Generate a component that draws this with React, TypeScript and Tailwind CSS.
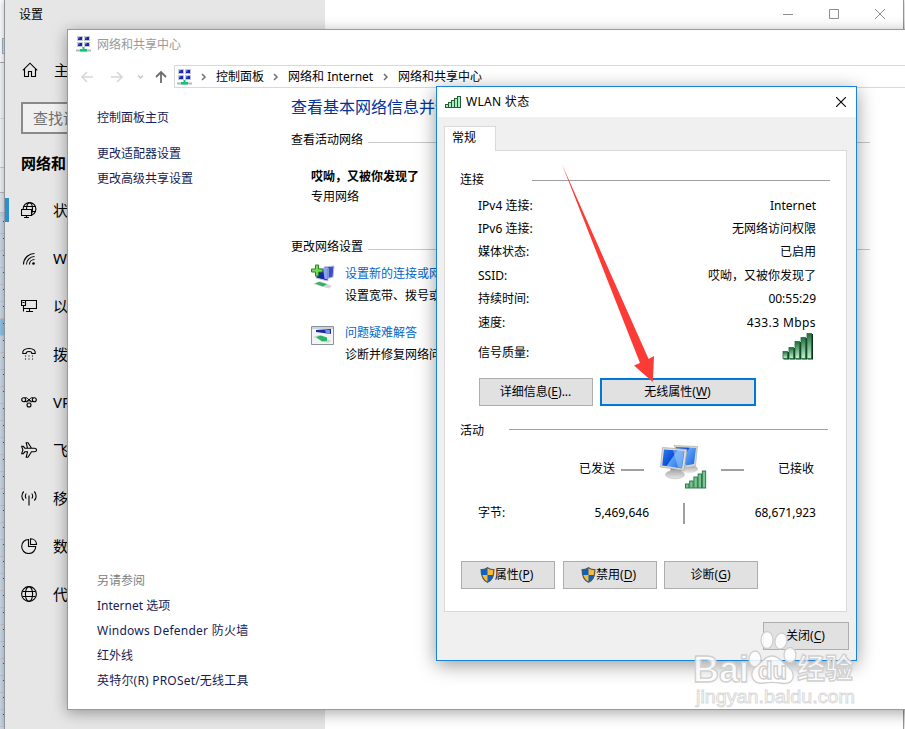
import type { ReactNode } from 'react';

const settingsNav: { label: string; icon: ReactNode; active?: boolean }[] = [
  {
    label: '状态',
    active: true,
    icon: (
      <>
        <circle cx="8.500" cy="7" r="6.400" />
        <ellipse cx="8.500" cy="7" rx="3" ry="6.400" />
        <path d="M2.800 4.500h11.400M2.800 9.500h11.400" />
        <path d="M.5 7.500h10v6H.5z" fill="#e6e6e6" />
        <path d="M5.500 13.500v2M3 15.500h5" />
      </>
    ),
  },
  {
    label: 'WLAN',
    icon: (
      <>
        <path d="M2.500 14.500c0-6 5-11 11-11M5.500 14.500c0-4.400 3.600-8 8-8M8.500 14.500c0-2.800 2.200-5 5-5" />
        <circle cx="12.500" cy="13.500" r="1.300" fill="currentColor" stroke="none" />
      </>
    ),
  },
  {
    label: '以太网',
    icon: <path d="M4.500 2.500h11v8h-13M.5 2.500h4v5h-4zM2.500 7.500v6M8.500 10.500v3M5 13.500h7M1.500 4.500h2" />,
  },
  {
    label: '拨号',
    icon: (
      <>
        <path d="M1.800 7.500C1.300 4.500 3.500 2.500 8 2.500s6.700 2 6.200 5h-3.400c.2-1.200-.3-2-2.800-2s-3 .8-2.800 2z" />
        <path d="M4.500 9.500v1M8 9.500v1M11.500 9.500v1M4.500 12.500v1M8 12.500v1M11.500 12.500v1" />
      </>
    ),
  },
  {
    label: 'VPN',
    icon: (
      <>
        <circle cx="2.700" cy="5.800" r="2" />
        <circle cx="13.300" cy="5.800" r="2" />
        <circle cx="8" cy="11" r="2" />
        <path d="M3.500 4C5 3 6.500 4 7.500 5.500L10 8.500M12.500 4C11 3 9.500 4 8.500 5.500L6 8.500M4 7.500c1.500.5 2.500-.5 4-2.500 1.500 2 2.500 3 4 2.500" strokeWidth="1" />
      </>
    ),
  },
  {
    label: '飞行模式',
    icon: <path d="M6.500 6.200h4L7 .7H5.200l1.300 5.500H3.800L2.300 4.300H.7L1.900 8 .7 11.700h1.600l1.500-1.900h2.700L5.200 15.300H7l3.500-5.500h3c1.100 0 2-.7 2-1.800s-.9-1.800-2-1.800h-3" />,
  },
  {
    label: '移动热点',
    icon: <path d="M8 5.500v10M5.300 8.500C4 7.500 4 5 5.300 3.500M10.700 8.500C12 7.500 12 5 10.700 3.500M2.700 10.500C.3 8.500.3 4 2.700 1.500M13.300 10.500c2.400-2 2.400-6.500 0-9" />,
  },
  {
    label: '数据使用量',
    icon: <path d="M7.500 1.500C3.500 1.500.7 4.500.7 8.500s3 7 7 7 7-3 7-7H7.500zM9.500.7v5.800h6C15.500 3 13 .7 9.500.7z" />,
  },
  {
    label: '代理',
    icon: (
      <>
        <circle cx="8" cy="8" r="7.400" />
        <ellipse cx="8" cy="8" rx="3.600" ry="7.400" />
        <path d="M1.500 5.500h13M1.500 10.500h13" />
      </>
    ),
  },
];

const connectionRows = [
  { label: 'IPv4 连接:', value: 'Internet' },
  { label: 'IPv6 连接:', value: '无网络访问权限' },
  { label: '媒体状态:', value: '已启用' },
  { label: 'SSID:', value: '哎呦，又被你发现了' },
  { label: '持续时间:', value: '00:55:29' },
  { label: '速度:', value: '433.3 Mbps' },
];

function NavIcon({ children }: { children: ReactNode }) {
  return (
    <svg width="16" height="16" viewBox="0 0 16 16" fill="none" stroke="currentColor" strokeWidth="1.1" className="shrink-0">
      {children}
    </svg>
  );
}

function NetworkIcon() {
  return (
    <svg width="15" height="16" viewBox="0 0 15 16" className="shrink-0">
      {[[1, 0], [8, 0], [1, 6], [8, 6]].map(([x, y]) => (
        <g key={`${x}-${y}`}>
          <rect x={x} y={y} width="6" height="5" fill="#c3c8cf" />
          <rect x={x + 1} y={y + 1} width="4" height="3" fill="#1a22b8" />
          <rect x={x + 1} y={y + 1} width="1.500" height="1.500" fill="#6a86e8" />
        </g>
      ))}
      <rect y="13.500" width="15" height="2" fill="#b4bab8" />
      <path d="M6.500 11h2v2H11v2.500H4V13h2.500z" fill="#08c878" />
    </svg>
  );
}

function Chevron() {
  return (
    <svg width="6" height="8" viewBox="0 0 6 8" fill="none" stroke="#707070" strokeWidth="1.500" className="shrink-0">
      <path d="M1 1l3 3-3 3" />
    </svg>
  );
}

function Shield() {
  return (
    <svg width="15" height="16" viewBox="0 0 15 16" className="-ml-[2px] shrink-0">
      <path d="M7.500.5c2 1.500 4 2 6.500 2C14 9 12.500 13 7.500 15.500 2.500 13 1 9 1 2.500c2.500 0 4.500-.5 6.500-2z" fill="#fdb92f" />
      <path d="M7.500.5V8H1.300C1 6.500 1 4.500 1 2.500c2.500 0 4.500-.5 6.500-2zM7.500 8h6.200c-.6 3.600-2.400 6-6.200 7.500z" fill="#0a63c4" />
      <path d="M7.500.7c2 1.500 4 2 6.400 2C13.900 9 12.400 13 7.500 15.300 2.600 13 1.100 9 1.100 2.700c2.500 0 4.400-.5 6.400-2z" fill="none" stroke="#4d5966" strokeWidth="1.200" />
    </svg>
  );
}

function SignalBars() {
  return (
    <svg width="31" height="27" viewBox="0 0 31 27">
      <defs>
        <linearGradient id="bars" x1="0" y1="0" x2="0" y2="1">
          <stop offset="0" stopColor="#1f6e3c" />
          <stop offset="1" stopColor="#c2f4d0" />
        </linearGradient>
      </defs>
      {[7, 11, 17, 21, 25].map((h, i) => (
        <g key={h}>
          <rect x={i * 6 + 1.500} y={26 - h} width="5.500" height={h + 0.5} fill="#0d2f1a" />
          <rect x={i * 6 + 1} y={25.500 - h} width="4.500" height={h} fill="url(#bars)" stroke="#20703e" strokeWidth="0.8" />
        </g>
      ))}
    </svg>
  );
}

function ComputersIcon() {
  return (
    <svg width="47" height="44" viewBox="0 0 47 44">
      <defs>
        <linearGradient id="screen" x1="0" y1="0" x2="1" y2="0.6">
          <stop offset="0" stopColor="#2f7cf0" />
          <stop offset="0.5" stopColor="#0c4fd8" />
          <stop offset="0.55" stopColor="#5da0f6" />
          <stop offset="1" stopColor="#2c74e6" />
        </linearGradient>
        <linearGradient id="base" x1="0" y1="0" x2="0" y2="1">
          <stop offset="0" stopColor="#a9a9a9" />
          <stop offset="1" stopColor="#e9e9e9" />
        </linearGradient>
      </defs>
      <ellipse cx="29" cy="24" rx="9" ry="4" fill="url(#base)" />
      <path d="M14 .5l23.500 1-2 19.500L26 23z" fill="#d9d6cf" stroke="#a9a69f" strokeWidth="0.6" />
      <path d="M15.500 2 36 3l-2 16-8 1.500z" fill="url(#screen)" />
      <path d="M11 23l10 2 2 5H9z" fill="#8e8e8e" />
      <ellipse cx="15" cy="29.500" rx="9.500" ry="4.300" fill="url(#base)" stroke="#bcbcbc" strokeWidth="0.6" />
      <path d="M2.500 2.500 27 4.500l-3 21L.5 22z" fill="#dfdcd5" stroke="#a9a69f" strokeWidth="0.7" />
      <path d="M4 4.500 24.500 6l-2.500 17.500L2.200 20.500z" fill="url(#screen)" />
      <path d="M13 5.200l11 .8-2.300 17-3.500-.6z" fill="#9cc8fb" opacity="0.6" />
      {[4, 7, 11, 14, 17].map((h, i) => (
        <rect key={h} x={25.500 + i * 4.200} y={43 - h} width="3.400" height={h} fill="#7cc494" stroke="#20703e" strokeWidth="0.9" />
      ))}
    </svg>
  );
}

function DialogButton({ children, primary, className }: { children: ReactNode; primary?: boolean; className: string }) {
  return (
    <button
      className={`flex h-7 items-center justify-center bg-[#e1e1e1] pr-px whitespace-nowrap ${
        primary ? 'border-2 border-[#0078d7]' : 'border border-[#adadad]'
      } ${className}`}
    >
      {children}
    </button>
  );
}

function Key({ k }: { k: string }) {
  return (
    <span>
      (<span className="underline underline-offset-2">{k}</span>)
    </span>
  );
}

function DocumentSliver() {
  return (
    <div className="h-full w-1 overflow-hidden bg-white">
      <div className="h-[38px]" />
      <div className="ml-[2px] h-4 border border-r-0 border-[#9fb6cf] bg-[#dbe8f5]" />
      <div className="h-[9px] border-b border-[#a9adb3]" />
      <div className="h-14 border-b border-[#dcdfe3] bg-[#f7f8f9]" />
      <div className="h-[49px] border-b border-[#c9cdd2] bg-[#f7f8f9]" />
      <div className="h-[25px] border-b border-[#b5bac0] bg-[#f3f4f6]" />
      <div className="h-[20px] border-b border-[#c2c8d0] bg-[#e3e8ee]" />
      <div className="h-1 bg-[#c5d6e4]" />
      {Array.from({ length: 31 }, (_, i) => (
        <div key={i} className={`flex h-[17px] justify-end border-b border-[#d0c6c8] pt-[4px] ${i === 6 ? 'bg-[#8fc4ea]' : 'bg-[#cbdbe8]'}`}>
          <div className="h-px w-px bg-[#4a5560]" />
        </div>
      ))}
    </div>
  );
}

function SettingsWindow() {
  return (
    <div className="absolute top-0 left-[4px] flex h-[729px] w-[900px] border-x border-[#8f959b] bg-white text-[15px] text-black shadow-[0_0_8px_rgba(0,0,0,0.3)]">
      <div className="w-[320px] shrink-0 bg-[#e6e6e6]">
        <div className="flex h-7 items-center pt-[2px] pl-[14px] text-[12px]">设置</div>
        <div className="mt-[18px] flex h-12 items-center gap-4 pl-[17px]">
          <NavIcon>
            <path d="M.8 8.300 8 1.200l7.200 7.100M2.500 7v7.500h4v-5h3v5h4V7" />
          </NavIcon>
          <span>主页</span>
        </div>
        <div className="mt-[8px] ml-[16px] flex h-8 w-[280px] items-center border-2 border-[#8a8a8a] bg-[#f0f0f0] pb-px pl-[10px] text-[#717171]">
          查找设置
        </div>
        <div className="mt-[15px] mb-[9px] flex h-7 items-center pl-[16px] font-bold">网络和 Internet</div>
        {settingsNav.map(item => (
          <div key={item.label} className="flex h-12 items-center">
            <div className={`h-6 w-1 ${item.active ? 'bg-[#2a8fd0]' : ''}`} />
            <div className="flex items-center gap-4 pl-[12px]">
              <NavIcon>{item.icon}</NavIcon>
              <span>{item.label}</span>
            </div>
          </div>
        ))}
      </div>
      <div className="flex h-7 flex-1 items-center justify-end gap-9 pr-[18px] text-[#8c8c8c]">
        <svg width="10" height="10" fill="none" stroke="currentColor"><path d="M0 5.500h10" /></svg>
        <svg width="10" height="10" fill="none" stroke="currentColor"><path d="M.5.5h9v9h-9z" /></svg>
        <svg width="10" height="10" fill="none" stroke="currentColor"><path d="M0 0l10 10M10 0L0 10" /></svg>
      </div>
    </div>
  );
}

function SectionTitle({ children }: { children: ReactNode }) {
  return (
    <div className="flex h-5 w-[579px] items-center">
      <span className="w-[77px] shrink-0">{children}</span>
      <div className="mt-[5px] h-px flex-1 bg-[#c8c8c8]" />
    </div>
  );
}

function SharingCenter() {
  return (
    <div className="absolute top-[29px] left-[67px] h-[681px] w-[860px] border border-[#9a9a9a] bg-white shadow-[0_3px_14px_rgba(0,0,0,0.35)]">
      <div className="flex h-7 items-center gap-[6px] pl-[8px] text-[#999]">
        <NetworkIcon />
        <span className="pt-px">网络和共享中心</span>
      </div>
      <div className="mt-[7px] flex h-[23px] items-center">
        <div className="flex w-[106px] items-center pl-[13px]">
          <svg width="88" height="14" viewBox="0 0 88 14" fill="none" strokeWidth="1.500">
            <path d="M12 7H1M6 2 1 7l5 5M30 7h11M36 2l5 5-5 5" stroke="#d6d6d6" />
            <path d="M57 5.500 59.500 8 62 5.500" stroke="#c4c4c4" />
            <path d="M80 13V2M75 7l5-5 5 5" stroke="#6d6d6d" strokeWidth="1.800" />
          </svg>
        </div>
        <div className="flex h-[23px] flex-1 items-center border border-[#d9d9d9] pl-[2px] whitespace-nowrap">
          <NetworkIcon />
          <div className="ml-[9px] flex items-center gap-[9px]">
            <Chevron />
            <span>控制面板</span>
            <Chevron />
            <span className="w-[86px]">网络和 Internet</span>
            <Chevron />
            <span>网络和共享中心</span>
          </div>
        </div>
      </div>

      <div className="flex">
        <div className="w-[223px] shrink-0 pt-[17px] pl-[29px] leading-[25px] text-[#151c55]">
          <p>控制面板主页</p>
          <p className="mt-[11px]">更改适配器设置</p>
          <p>更改高级共享设置</p>
          <div className="mt-[377px] whitespace-nowrap">
            <p className="text-[#808080]">另请参阅</p>
            <p>Internet 选项</p>
            <p className="tracking-[0.25px]">Windows Defender 防火墙</p>
            <p>红外线</p>
            <p className="tracking-[0.2px]">英特尔(R) PROSet/无线工具</p>
          </div>
        </div>
        <div className="pt-[7px] whitespace-nowrap">
          <h1 className="mb-[10px] text-[16px] leading-[25px] text-[#003399]">查看基本网络信息并设置连接</h1>
          <SectionTitle>查看活动网络</SectionTitle>
          <div className="mt-[17px] mb-[30px] pl-5 leading-5">
            <p className="font-bold">哎呦，又被你发现了</p>
            <p>专用网络</p>
          </div>
          <SectionTitle>更改网络设置</SectionTitle>
          <div className="mt-[6px] flex h-[44px] gap-[9px] pl-5 leading-[22px]">
            <svg width="25" height="26" viewBox="0 0 25 26" className="mt-px">
              <path d="M13 3l10-1-1 11-7 2z" fill="#3b50c8" stroke="#b7c0d8" />
              <path d="M5 5l12-1v13L5 14z" fill="#1725a8" stroke="#c5cbe0" />
              <path d="M12 4.500h4.500v11l-3-.8z" fill="#8ba3ee" />
              <path d="M2 20l7-3 12 5-3 2.500z" fill="#d2d6d5" />
              <path d="M4 19.500l4-1.500 8 2-4 2.500z" fill="#28b463" />
              <path d="M4.500 1h3v4h4v3h-4v4h-3V8h-4V5h4z" fill="#77d957" stroke="#268c1c" />
            </svg>
            <div>
              <p className="text-[#0066cc]">设置新的连接或网络</p>
              <p>设置宽带、拨号或 VPN 连接</p>
            </div>
          </div>
          <div className="mt-[15px] flex h-[44px] gap-[9px] pl-5 leading-[22px]">
            <svg width="25" height="22" viewBox="0 0 25 22" className="mt-[3px]">
              <path d="M.5 1.500h22v18H.5z" fill="#f1f3f4" stroke="#8b9299" />
              <path d="M1 2h21v2H1z" fill="#cbd2da" />
              <path d="M5 5l15-1v5L5 7z" fill="#1b2a9e" />
              <path d="M14 5h5v4l-4-.5z" fill="#7691e0" />
              <path d="M2 12l6-2 12 6-3 2z" fill="#d0d6d4" />
              <path d="M5 12l5-1.500 6 2V16l-5 .5z" fill="#2ab765" />
            </svg>
            <div>
              <p className="text-[#0066cc]">问题疑难解答</p>
              <p>诊断并修复网络问题，或者获得疑难解答信息。</p>
            </div>
          </div>
        </div>
      </div>
    </div>
  );
}

function WlanDialog() {
  return (
    <div className="absolute top-[86px] left-[436px] h-[575px] w-[421px] border border-[#1883d7] bg-[#f0f0f0] whitespace-nowrap shadow-[0_4px_18px_rgba(0,0,0,0.4)]">
      <div className="flex h-[30px] items-center bg-white pr-[10px] pl-[8px]">
        <svg width="16" height="12" viewBox="0 0 16 12" fill="#a8f0bc" stroke="#265c38">
          {[3, 5, 7, 9, 11].map((h, i) => (
            <rect key={h} x={0.5 + i * 3} y={11.500 - h} width="3" height={h} />
          ))}
        </svg>
        <span className="ml-[5px] flex-1 tracking-[0.3px]">WLAN 状态</span>
        <svg width="10" height="10" fill="none" stroke="black" strokeWidth="1.100"><path d="M0 0l10 10M10 0L0 10" /></svg>
      </div>

      <div className="px-[7px] pt-[9px]">
        <div className="relative z-10 -mb-px flex h-[25px] w-[52px] items-center border border-b-0 border-[#d9d9d9] bg-white pb-[2px] pl-[7px]">
          常规
        </div>
        <div className="h-[462px] w-[403px] border border-[#d9d9d9] bg-white">
          <div className="mt-[19px] ml-[15px] flex h-5 w-[370px] items-center">
            <span className="w-[72px]">连接</span>
            <div className="h-px flex-1 bg-[#a0a0a0]" />
          </div>
          <div className="mt-[4px] pr-[30px] pl-[33px]">
            {connectionRows.map(row => (
              <div key={row.label} className="flex h-[23.400px] items-center justify-between">
                <span>{row.label}</span>
                <span className={row.value.endsWith('Mbps') ? 'tracking-[0.4px]' : ''}>{row.value}</span>
              </div>
            ))}
            <div className="mt-[-1px] flex h-[30px] items-start justify-between">
              <span className="pt-[12px]">信号质量:</span>
              <div className="mr-[3px]"><SignalBars /></div>
            </div>
          </div>
          <div className="mt-[15px] ml-[34px] flex gap-[7px]">
            <DialogButton className="w-[114px]">详细信息<Key k="E" />...</DialogButton>
            <DialogButton className="w-[156px]" primary>无线属性<Key k="W" /></DialogButton>
          </div>
          <div className="mt-[15px] ml-[15px] flex h-5 w-[368px] items-center">
            <span className="w-[49px]">活动</span>
            <div className="mb-[4px] h-px flex-1 bg-[#a0a0a0]" />
          </div>
          <div className="mt-[4px] flex h-[44px] items-center pl-[134px]">
            <span className="w-[42px] pt-[3px]">已发送</span>
            <div className="mt-[5px] h-[2px] w-[23px] bg-[#a0a0a0]" />
            <div className="mr-[14px] ml-[16px] w-[47px]"><ComputersIcon /></div>
            <div className="mt-[5px] h-[2px] w-[23px] bg-[#a0a0a0]" />
            <span className="ml-[34px] pt-[3px]">已接收</span>
          </div>
          <div className="mt-[12px] flex h-6 items-center pr-[30px] pl-[33px]">
            <span className="w-[60px] pb-px">字节:</span>
            <span className="w-[111px] pb-px text-right">5,469,646</span>
            <div className="ml-[34px] h-[21px] w-[2px] bg-[#a0a0a0]" />
            <span className="flex-1 pb-px text-right">68,671,923</span>
          </div>
          <div className="mt-[36px] ml-[16px] flex gap-[8px]">
            <DialogButton className="w-[94px]"><Shield />属性<Key k="P" /></DialogButton>
            <DialogButton className="w-[94px]"><Shield />禁用<Key k="D" /></DialogButton>
            <DialogButton className="-ml-px w-[94px]">诊断<Key k="G" /></DialogButton>
          </div>
        </div>
        <div className="mt-[10px] flex justify-end">
          <DialogButton className="w-[86px]">关闭<Key k="C" /></DialogButton>
        </div>
      </div>
    </div>
  );
}

function Watermark() {
  return (
    <svg className="absolute top-[625px] left-[688px]" width="180" height="88" viewBox="0 0 180 88">
      <g fill="#fff" fillOpacity="0.85" stroke="#cfcfcf" strokeWidth="1.300" fontFamily='"Liberation Sans", "Noto Sans CJK SC", sans-serif' fontWeight="700">
        <text x="5" y="57" fontSize="36" textLength="56" lengthAdjust="spacingAndGlyphs">Bai</text>
        <ellipse cx="67" cy="34" rx="6" ry="8" />
        <ellipse cx="79" cy="15" rx="6" ry="8.500" />
        <ellipse cx="93" cy="16" rx="6" ry="8" transform="rotate(12 93 16)" />
        <ellipse cx="102" cy="30" rx="6" ry="7.500" />
        <path d="M84 31c7 0 9 5 14 9 5 4 8 7 7 13-2 6-8 6-13 5-6-1-10-1-16 0-6 1-11-1-12-7-1-5 2-8 6-11 5-4 7-9 14-9z" />
        <text x="70" y="54" fontSize="23" textLength="29" lengthAdjust="spacingAndGlyphs">du</text>
        <text x="109" y="54" fontSize="28" textLength="56" lengthAdjust="spacingAndGlyphs">经验</text>
        <text x="8" y="78" fontSize="18" stroke="#d9d9d9" strokeWidth="0.900" fontWeight="400" textLength="159" lengthAdjust="spacingAndGlyphs">jingyan.baidu.com</text>
      </g>
    </svg>
  );
}

export default function App() {
  return (
    <div className="relative h-[729px] w-[905px] overflow-hidden bg-white font-['Noto_Sans','Noto_Sans_CJK_SC',sans-serif] text-[12px] leading-4 text-black">
      {/* sliver of the document behind the windows */}
      <DocumentSliver />
      <SettingsWindow />
      <SharingCenter />
      <WlanDialog />
      <svg className="pointer-events-none absolute top-[160px] left-[556px]" width="104" height="226" viewBox="556 160 104 226">
        <path d="M562 164.500 648.600 359l5.400-3-1.200 26L634 365.500l6-2.500z" fill="#fc3a36" />
      </svg>
      <Watermark />
    </div>
  );
}
